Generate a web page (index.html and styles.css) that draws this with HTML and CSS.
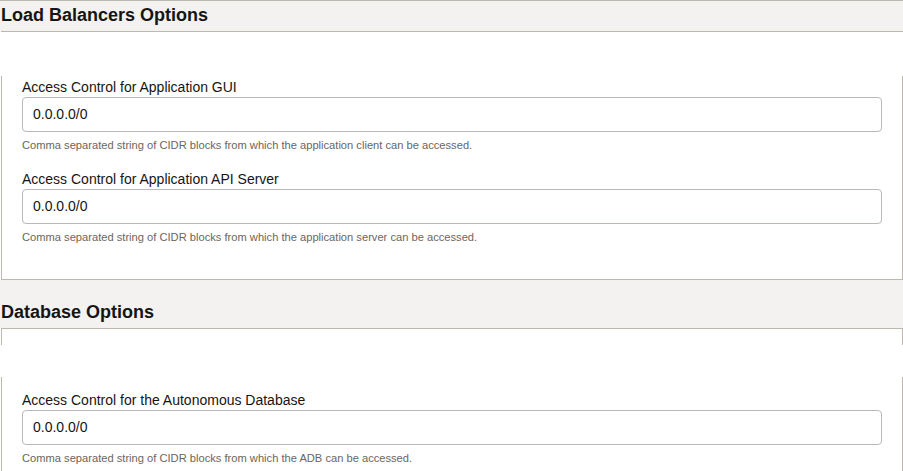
FILE: index.html
```html
<!DOCTYPE html>
<html lang="en">
<head>
<meta charset="utf-8">
<title>Options</title>
<link rel="stylesheet" href="styles.css">
</head>
<body>
<div class="page">
  <section class="section">
    <h2 class="section-title">Load Balancers Options</h2>
    <div class="panel-wrap">
      <div class="panel">
        <div class="panel-cap panel-cap--lb"></div>
        <div class="panel-gap panel-gap--lb"></div>
        <div class="fields fields--lb">
          <div class="field">
            <label class="field-label">Access Control for Application GUI</label>
            <div class="field-input">0.0.0.0/0</div>
            <div class="field-help">Comma separated string of CIDR blocks from which the application client can be accessed.</div>
          </div>
          <div class="field">
            <label class="field-label">Access Control for Application API Server</label>
            <div class="field-input">0.0.0.0/0</div>
            <div class="field-help">Comma separated string of CIDR blocks from which the application server can be accessed.</div>
          </div>
        </div>
      </div>
    </div>
  </section>
  <section class="section">
    <h2 class="section-title">Database Options</h2>
    <div class="panel-wrap">
      <div class="panel">
        <div class="panel-cap panel-cap--db"></div>
        <div class="panel-gap panel-gap--db"></div>
        <div class="fields fields--db">
          <div class="field">
            <label class="field-label">Access Control for the Autonomous Database</label>
            <div class="field-input">0.0.0.0/0</div>
            <div class="field-help">Comma separated string of CIDR blocks from which the ADB can be accessed.</div>
          </div>
        </div>
      </div>
    </div>
  </section>
</div>
</body>
</html>
```

FILE: styles.css
```css
* { box-sizing: border-box; }

html, body {
  margin: 0;
  padding: 0;
  background: #f3f2f0;
  font-family: "Liberation Sans", Arial, Helvetica, sans-serif;
  color: #161513;
}

.page {
  width: 903px;
  border-top: 1px solid #bcb7b1;
}

.section + .section {
  margin-top: 18px;
}

.section-title {
  margin: 0;
  padding: 0 0 2px 1px;
  font-size: 18px;
  line-height: 28px;
  font-weight: bold;
  color: #161513;
}

.panel-wrap {
  background: #ffffff;
  padding-left: 1px;
}

.panel {
  border-top: 1px solid #bcb7b1;
  background: #ffffff;
}

.panel-cap--lb { height: 0; }
.panel-gap--lb { height: 44px; }

.panel-cap--db {
  height: 16px;
  border-left: 1px solid #bcb7b1;
  border-right: 1px solid #bcb7b1;
}
.panel-gap--db { height: 32px; }

.fields {
  border-left: 1px solid #bcb7b1;
  border-right: 1px solid #bcb7b1;
  padding: 1px 20px 35px 20px;
  display: flex;
  flex-direction: column;
  gap: 17px;
}

.fields--lb {
  border-bottom: 1px solid #bcb7b1;
}

.fields--db {
  padding-top: 13px;
}

.field {
  display: flex;
  flex-direction: column;
}

.field-label {
  font-size: 14px;
  line-height: 20px;
  color: #161513;
}

.field-input {
  height: 35px;
  border: 1px solid #bdb8b3;
  border-radius: 4px;
  padding: 0 10px;
  font-size: 14px;
  line-height: 33px;
  color: #161513;
  background: #ffffff;
}

.field-help {
  margin-top: 6px;
  font-size: 11.15px;
  line-height: 14px;
  color: #6b6661;
}
```
